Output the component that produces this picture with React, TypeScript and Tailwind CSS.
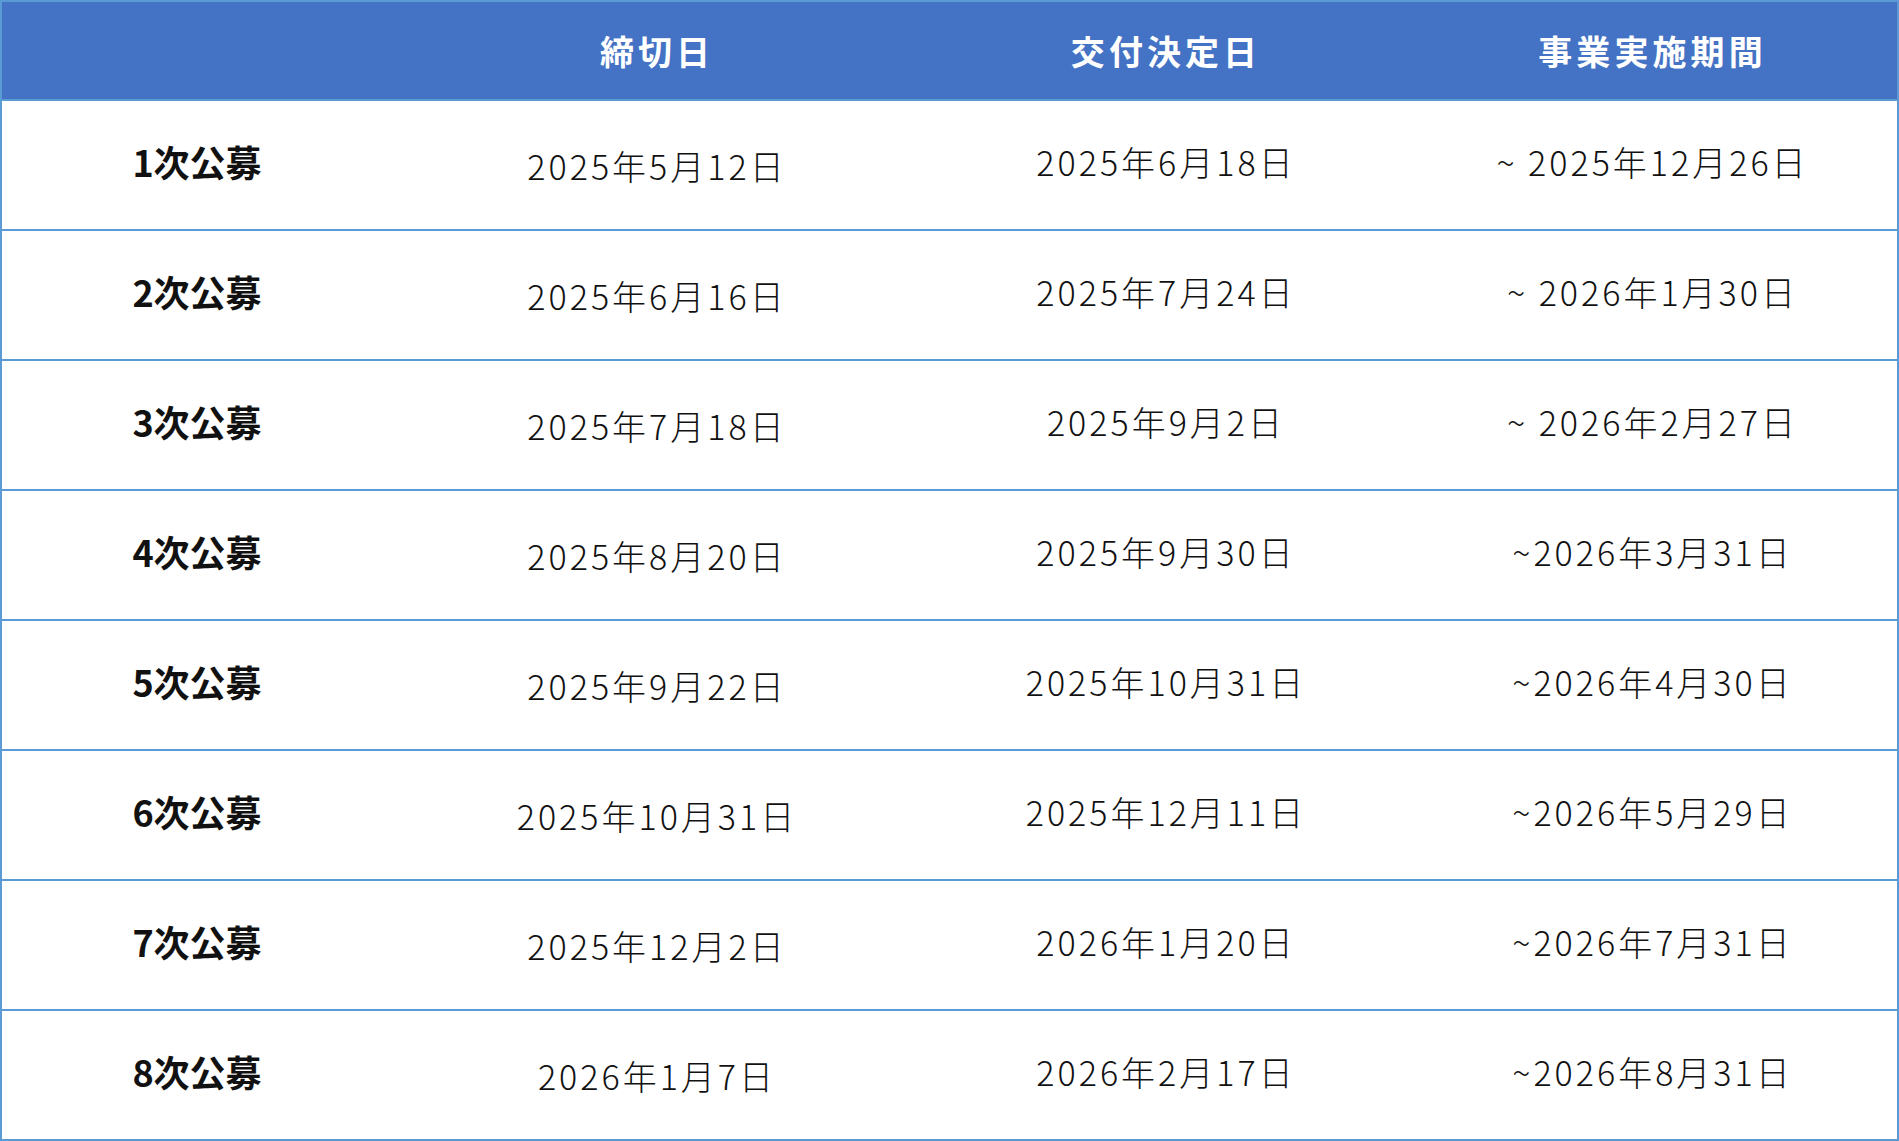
import React from "react";

const rows: [string, string, string, string][] = [
  ["1次公募", "2025年5月12日", "2025年6月18日", "~ 2025年12月26日"],
  ["2次公募", "2025年6月16日", "2025年7月24日", "~ 2026年1月30日"],
  ["3次公募", "2025年7月18日", "2025年9月2日", "~ 2026年2月27日"],
  ["4次公募", "2025年8月20日", "2025年9月30日", "~2026年3月31日"],
  ["5次公募", "2025年9月22日", "2025年10月31日", "~2026年4月30日"],
  ["6次公募", "2025年10月31日", "2025年12月11日", "~2026年5月29日"],
  ["7次公募", "2025年12月2日", "2026年1月20日", "~2026年7月31日"],
  ["8次公募", "2026年1月7日", "2026年2月17日", "~2026年8月31日"],
];

const grid = "grid grid-cols-[400px_510px_508px_1fr]";

export default function App() {
  return (
    <div
      className="w-[1899px] h-[1141px] bg-white border-2 border-[#5b9bd5]"
      style={{ fontFamily: '"Noto Sans CJK JP", "Noto Sans", sans-serif' }}
    >
      <div className={`${grid} h-[97px] bg-[#4472c4] text-white font-bold text-[34px] tracking-[0.12em]`}>
        <div />
        <div className="flex items-center justify-center">締切日</div>
        <div className="flex items-center justify-center">交付決定日</div>
        <div className="flex items-center justify-center pr-[12px]">事業実施期間</div>
      </div>
      {rows.map((r) => (
        <div key={r[0]} className={`${grid} h-[130px] border-t-2 border-[#5b9bd5] text-[#111]`}>
          <div className="flex items-center justify-center font-bold text-[36px] pb-[8px] pr-[10px]">{r[0]}</div>
          <div className="flex items-center justify-center font-light text-[34px] tracking-[3px]">{r[1]}</div>
          <div className="flex items-center justify-center font-light text-[34px] tracking-[3px] pb-[8px]">{r[2]}</div>
          <div className="flex items-center justify-center font-light text-[34px] tracking-[3px] pb-[8px] pr-[12px] whitespace-pre">{r[3]}</div>
        </div>
      ))}
    </div>
  );
}
